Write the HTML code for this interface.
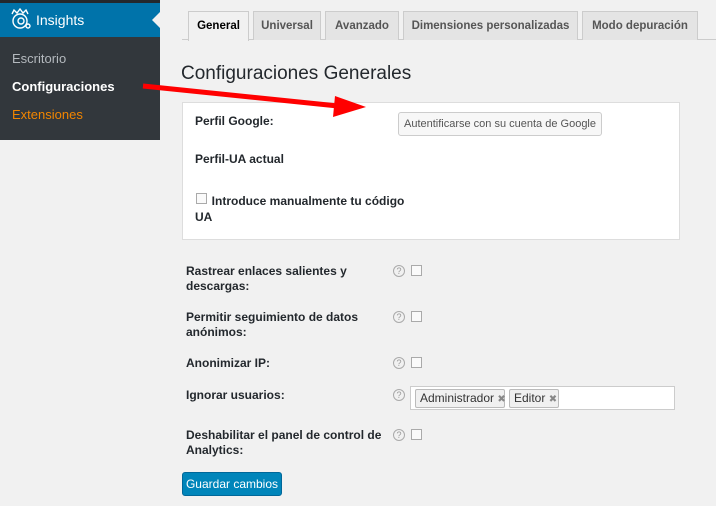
<!DOCTYPE html>
<html><head><meta charset="utf-8"><style>
*{margin:0;padding:0;box-sizing:border-box}
body{width:716px;height:506px;background:#f1f1f1;font-family:"Liberation Sans",sans-serif;font-size:12px;color:#23282d;position:relative;overflow:hidden}
.a{position:absolute}
.b{font-weight:bold}
.tab{position:absolute;top:11px;height:29px;border:1px solid #ccc;border-bottom:none;background:#e4e4e4;font-weight:bold;font-size:11.5px;color:#555;text-align:center;line-height:28px;white-space:nowrap}
.q{position:absolute;width:12px;height:12px;border:1px solid #aaa;border-radius:50%;font-size:9px;color:#999;text-align:center;line-height:10px}
.cb{position:absolute;width:11px;height:11px;border:1px solid #aaa;background:#fafafa}
.tag{position:absolute;top:389px;height:19px;border:1px solid #bbb;background:#f0f0f0;border-radius:2px;font-size:12px;line-height:17px;padding-left:4px;color:#333;white-space:nowrap}
.tag span{font-size:10px;color:#888}
</style></head><body>
<div class="a" style="left:0;top:0;width:160px;height:140px;background:#32373c"></div>
<div class="a" style="left:0;top:0;width:160px;height:3px;background:#23282d"></div>
<div class="a" style="left:0;top:3px;width:160px;height:34px;background:#0073aa"></div>
<div class="a" style="left:152px;top:12px;width:0;height:0;border-top:8px solid transparent;border-bottom:8px solid transparent;border-right:8px solid #f1f1f1"></div>
<svg class="a" style="left:8px;top:8px" width="24" height="22" viewBox="0 0 24 22"><g fill="none" stroke="#fff" stroke-width="1.4"><path d="M4 6 L6 2 L9 5 L12 1 L15 5 L18 2 L20 6"/><circle cx="12" cy="13" r="7"/><circle cx="13" cy="13" r="3"/><circle cx="20" cy="18" r="2"/></g></svg>
<div class="a" style="left:36px;top:12px;color:#fff;font-size:14px">Insights</div>
<div class="a" style="left:12px;top:51px;color:#b4b9be;font-size:13px">Escritorio</div>
<div class="a b" style="left:12px;top:79px;color:#fff;font-size:13px">Configuraciones</div>
<div class="a" style="left:12px;top:107px;color:#f18500;font-size:13px">Extensiones</div>

<div class="a" style="left:182px;top:39px;width:534px;height:1px;background:#ccc"></div>
<div class="tab" style="left:188px;width:61px;background:#f1f1f1;color:#000;height:30px">General</div>
<div class="tab" style="left:253px;width:68px">Universal</div>
<div class="tab" style="left:325px;width:74px">Avanzado</div>
<div class="tab" style="left:403px;width:175px">Dimensiones personalizadas</div>
<div class="tab" style="left:582px;width:116px">Modo depuración</div>

<div class="a" style="left:181px;top:63px;font-size:19px;color:#23282d">Configuraciones Generales</div>

<div class="a" style="left:182px;top:102px;width:498px;height:138px;background:#fff;border:1px solid #ddd"></div>
<div class="a b" style="left:195px;top:114px">Perfil Google:</div>
<div class="a" style="left:398px;top:112px;width:204px;height:24px;border:1px solid #ccc;background:#f7f7f7;border-radius:3px;font-size:11px;color:#555;text-align:center;line-height:22px">Autentificarse con su cuenta de Google</div>
<div class="a b" style="left:195px;top:152px">Perfil-UA actual</div>
<div class="cb" style="left:196px;top:193px"></div>
<div class="a b" style="left:195px;top:193px;line-height:16px;width:210px">&nbsp;&nbsp;&nbsp;&nbsp; Introduce manualmente tu código UA</div>

<div class="a b" style="left:186px;top:264px;line-height:15px;width:190px">Rastrear enlaces salientes y descargas:</div>
<div class="q" style="left:393px;top:265px">?</div><div class="cb" style="left:411px;top:265px"></div>
<div class="a b" style="left:186px;top:310px;line-height:15px;width:190px">Permitir seguimiento de datos anónimos:</div>
<div class="q" style="left:393px;top:311px">?</div><div class="cb" style="left:411px;top:311px"></div>
<div class="a b" style="left:186px;top:356px">Anonimizar IP:</div>
<div class="q" style="left:393px;top:357px">?</div><div class="cb" style="left:411px;top:357px"></div>
<div class="a b" style="left:186px;top:388px">Ignorar usuarios:</div>
<div class="q" style="left:393px;top:389px">?</div>
<div class="a" style="left:410px;top:386px;width:265px;height:24px;border:1px solid #ccc;background:#fff"></div>
<div class="tag" style="left:415px;width:90px">Administrador <span>✖</span></div>
<div class="tag" style="left:509px;width:50px">Editor <span>✖</span></div>
<div class="a b" style="left:186px;top:428px;line-height:15px;width:200px">Deshabilitar el panel de control de Analytics:</div>
<div class="q" style="left:393px;top:429px">?</div><div class="cb" style="left:411px;top:429px"></div>

<div class="a" style="left:182px;top:472px;width:100px;height:24px;background:#0085ba;border:1px solid #006799;border-radius:3px;color:#fff;font-size:12px;text-align:center;line-height:22px">Guardar cambios</div>

<svg class="a" style="left:0;top:0" width="716" height="506"><path d="M143 86 L338 106" stroke="#f00" stroke-width="5"/><path d="M335 96 L366 107 L333 117 Z" fill="#f00"/></svg>
</body></html>
